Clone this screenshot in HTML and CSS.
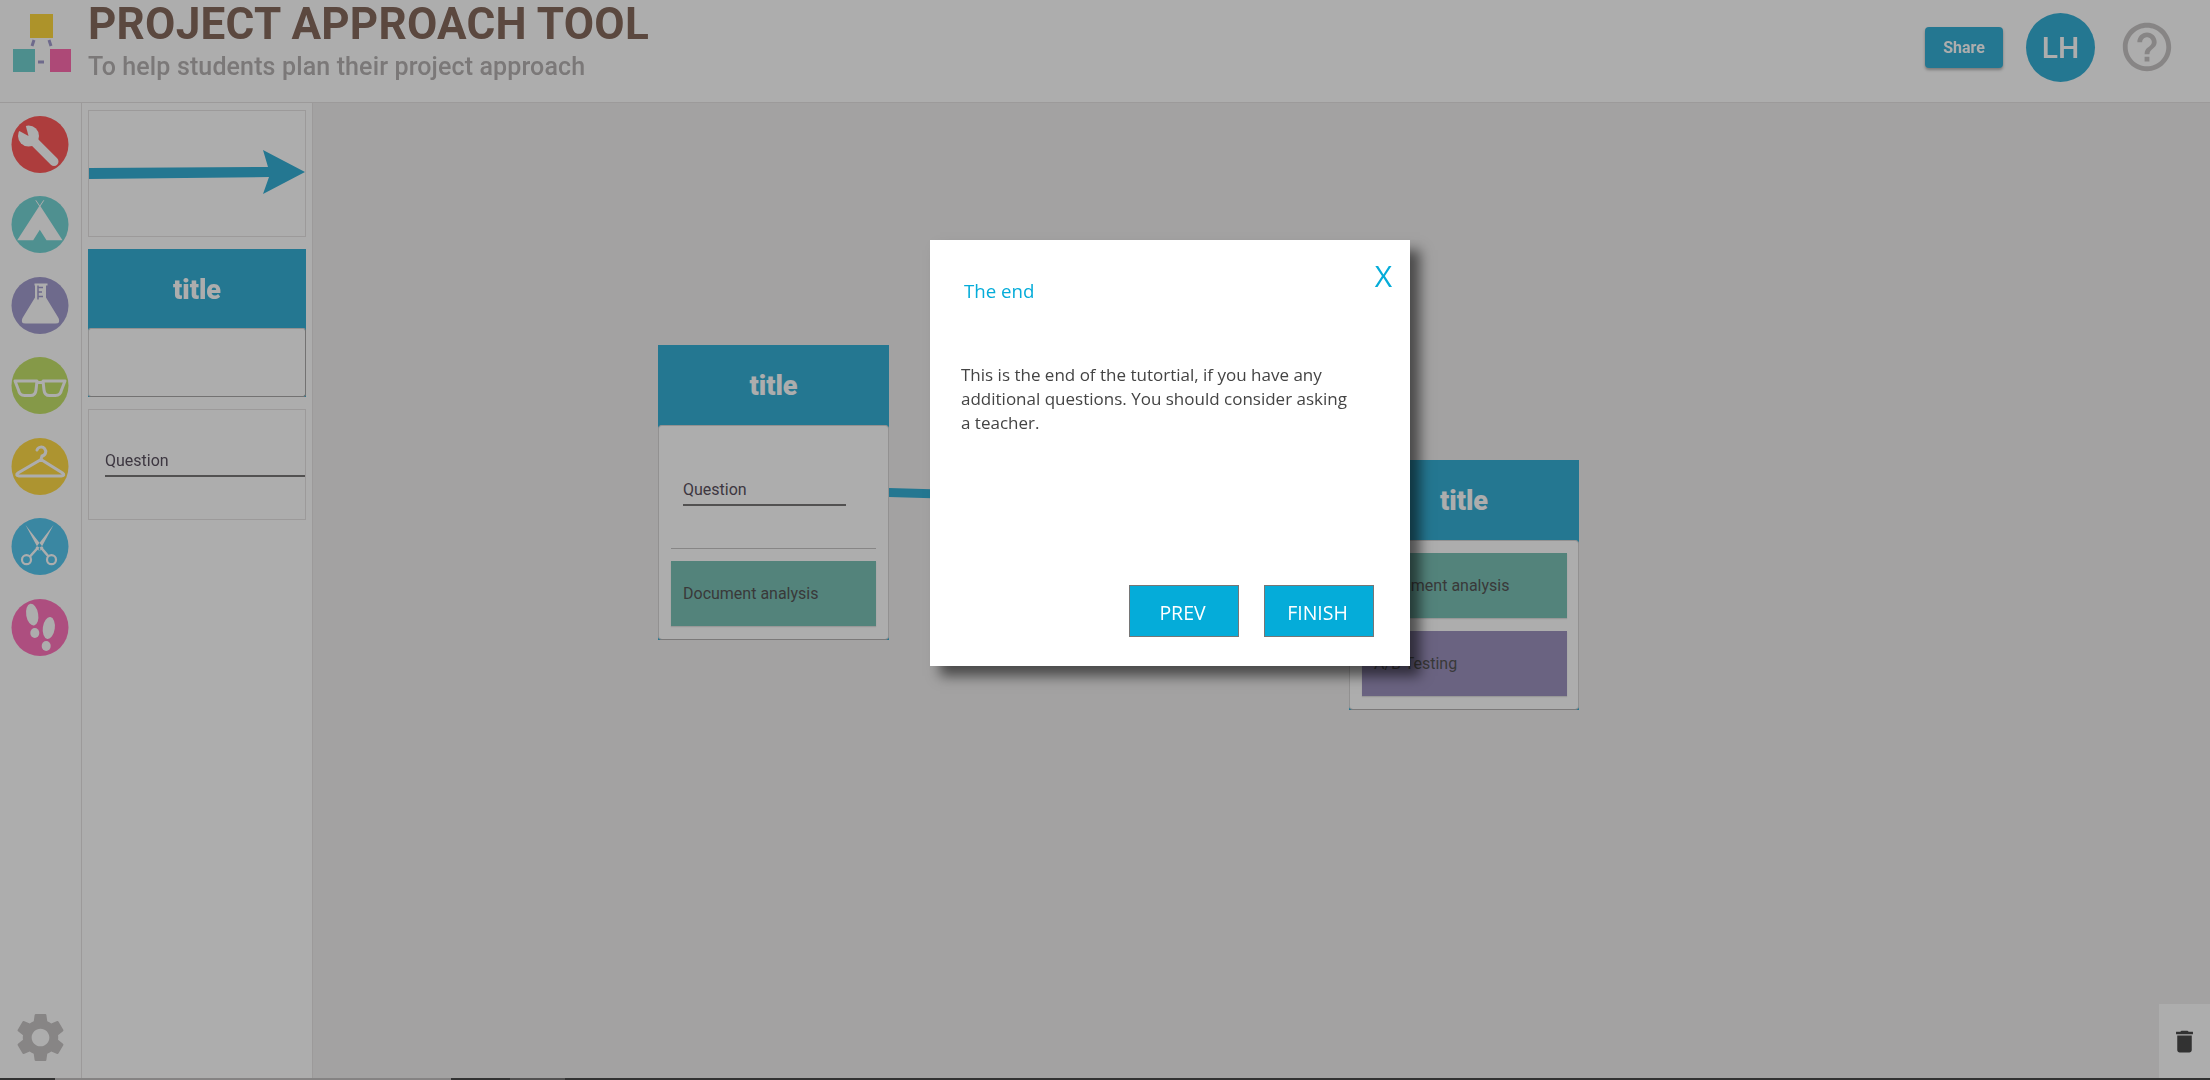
FILE: index.html
```html
<!DOCTYPE html>
<html lang="en">
<head>
    <meta charset="UTF-8">
    <meta name="viewport" content="width=device-width, initial-scale=1.0">
    <title>Project Approach Tool</title>
    <link rel="stylesheet" href="styles.css">
</head>
<body>
    <div class="app">
        <header class="top-bar">
            <svg class="logo" viewBox="0 0 72 72">
                <rect x="23" y="7" width="23" height="24" fill="#ffd93f"/>
                <rect x="6" y="42" width="22" height="23" fill="#72d2d0"/>
                <rect x="43" y="42" width="21" height="23" fill="#ff6cb0"/>
                <path d="M27 33l-2 6M42 33l2 6M31 55h6" stroke="#a39cce" stroke-width="3" fill="none"/>
            </svg>
            <div class="brand">
                <h1>PROJECT APPROACH TOOL</h1>
                <p>To help students plan their project approach</p>
            </div>
            <div class="top-actions">
                <button class="share-button">Share</button>
                <div class="avatar">LH</div>
                <svg class="help-icon" viewBox="0 0 24 24"><path d="M11 18h2v-2h-2v2zm1-16C6.48 2 2 6.48 2 12s4.48 10 10 10 10-4.48 10-10S17.52 2 12 2zm0 18c-4.41 0-8-3.59-8-8s3.59-8 8-8 8 3.59 8 8-3.59 8-8 8zm0-14c-2.21 0-4 1.79-4 4h2c0-1.1.9-2 2-2s2 .9 2 2c0 2-3 1.75-3 5h2c0-2.25 3-2.5 3-5 0-2.21-1.79-4-4-4z"/></svg>
            </div>
        </header>

        <div class="workspace">
            <nav class="icon-rail">
                <svg class="tool-icon" viewBox="0 0 57 57">
                    <circle cx="28.5" cy="28.5" r="28.5" fill="#ff5a5a"/>
                    <circle cx="17" cy="20" r="10.5" fill="#fff"/>
                    <path d="M20 23L42.500 45.500" stroke="#fff" stroke-width="9" stroke-linecap="round"/>
                    <path d="M17 20L6 14L13 5z" fill="#ff5a5a"/>
                </svg>
                <svg class="tool-icon" viewBox="0 0 57 57">
                    <circle cx="28.5" cy="28.5" r="28.500" fill="#75d5d5"/>
                    <path d="M28.300 9.300L51 44.300H35L28.300 33.700L21.700 44.300H5.700z" fill="#fff"/>
                    <path d="M24.300 4.300l4 6 4-6" stroke="#fff" stroke-width="1" fill="none"/>
                </svg>
                <svg class="tool-icon" viewBox="0 0 57 57">
                    <circle cx="28.5" cy="28.5" r="28.500" fill="#a39cce"/>
                    <path d="M23 6.500h13v2h-1.500v12L47 41q2.500 5.500-3 5.500H14q-5.500 0-3-5.500l12.500-20.500v-12H23z" fill="#fff"/>
                    <path d="M26.500 8.500v14M26.500 10.500h5M26.500 15h4M26.500 19.500h5" stroke="#a39cce" stroke-width="1.500" fill="none"/>
                </svg>
                <svg class="tool-icon" viewBox="0 0 57 57">
                    <circle cx="28.5" cy="28.5" r="28.500" fill="#c4e26a"/>
                    <path d="M3.500 24H25.500L24.500 33Q24 38.500 19 38.500H13Q8 38.500 7 33zM53.500 24H31.500L32.500 33Q33 38.500 38 38.500H44Q49 38.500 50 33zM25.500 25.500H31.500" stroke="#fff" stroke-width="3" fill="none" stroke-linejoin="round"/>
                </svg>
                <svg class="tool-icon" viewBox="0 0 57 57">
                    <circle cx="28.5" cy="28.5" r="28.500" fill="#ffdb47"/>
                    <path d="M25.500 12a4.500 4.500 0 1 1 5 6l-1 3.500L6.500 35q-3 2.500 1 3H50q4-.5 1-3L29.500 21.500" stroke="#fff" stroke-width="3" fill="none" stroke-linecap="round"/>
                </svg>
                <svg class="tool-icon" viewBox="0 0 57 57">
                    <circle cx="28.5" cy="28.5" r="28.500" fill="#56c8ef"/>
                    <path d="M14 7L32 30L28 33zM42 7L24 30L28 33z" fill="#fff"/>
                    <path d="M27 29L18.500 38.500M29 29L37 38.500" stroke="#fff" stroke-width="2.500"/>
                    <circle cx="15" cy="41.700" r="4.500" stroke="#fff" stroke-width="2.200" fill="none"/>
                    <circle cx="40" cy="41.700" r="4.500" stroke="#fff" stroke-width="2.200" fill="none"/>
                </svg>
                <svg class="tool-icon" viewBox="0 0 57 57">
                    <circle cx="28.5" cy="28.5" r="28.500" fill="#ff74bc"/>
                    <ellipse cx="20.700" cy="15.700" rx="6" ry="11" transform="rotate(-10 20.700 15.700)" fill="#fff"/>
                    <ellipse cx="23.300" cy="34" rx="4.500" ry="5" fill="#fff"/>
                    <ellipse cx="37.300" cy="29" rx="6" ry="11" transform="rotate(8 37.300 29)" fill="#fff"/>
                    <ellipse cx="34.700" cy="47" rx="4.500" ry="5" fill="#fff"/>
                </svg>
                <svg class="settings-icon" viewBox="0 0 24 24"><path d="M19.140 12.940c.04-.3.06-.61.06-.94 0-.32-.02-.64-.07-.94l2.030-1.580c.18-.14.23-.41.12-.61l-1.920-3.320c-.12-.22-.37-.29-.59-.22l-2.390.96c-.5-.38-1.030-.7-1.620-.94l-.36-2.540c-.04-.24-.24-.41-.48-.41h-3.840c-.24 0-.43.17-.47.41l-.36 2.540c-.59.24-1.130.57-1.620.94l-2.390-.96c-.22-.08-.47 0-.59.22L2.740 8.870c-.12.21-.08.47.12.61l2.030 1.580c-.05.3-.09.63-.09.94s.02.64.07.94l-2.030 1.580c-.18.14-.23.41-.12.61l1.920 3.320c.12.22.37.29.59.22l2.390-.96c.5.38 1.030.7 1.620.94l.36 2.540c.05.24.24.41.48.41h3.840c.24 0 .44-.17.47-.41l.36-2.540c.59-.24 1.130-.56 1.620-.94l2.390.96c.22.08.47 0 .59-.22l1.920-3.320c.12-.22.07-.47-.12-.61l-2.010-1.580zM12 15.600c-1.980 0-3.600-1.620-3.600-3.600s1.620-3.600 3.600-3.600 3.600 1.620 3.600 3.600-1.620 3.600-3.600 3.600z"/></svg>
            </nav>

            <aside class="palette">
                <div class="palette-item palette-arrow">
                    <svg viewBox="0 0 216 125" class="arrow-shape"><path d="M0 57L179 56L174 39L216 61L174 83L180 66L0 68z"/></svg>
                </div>
                <div class="palette-item palette-card">
                    <div class="palette-card-title">title</div>
                    <div class="palette-card-body"></div>
                </div>
                <div class="palette-item palette-question">
                    <div class="question-field">Question</div>
                </div>
            </aside>

            <main class="canvas">
                <svg class="connector" width="1897" height="975"><path d="M576 385L1036 398V407L576 394z"/></svg>

                <div class="node node-first">
                    <div class="node-title">title</div>
                    <div class="node-body">
                        <div class="node-question"><div class="question-field">Question</div></div>
                        <div class="node-divider"></div>
                        <div class="task task-green">Document analysis</div>
                    </div>
                </div>

                <div class="node node-second">
                    <div class="node-title">title</div>
                    <div class="node-body node-body-tasks">
                        <div class="task task-green">Document analysis</div>
                        <div class="task task-purple">A/B Testing</div>
                    </div>
                </div>

                <div class="trash">
                    <svg viewBox="0 0 24 24"><path d="M6 19c0 1.100.9 2 2 2h8c1.100 0 2-.9 2-2V7H6v12zM19 4h-3.500l-1-1h-5l-1 1H5v2h14V4z"/></svg>
                </div>
            </main>
        </div>
    </div>

    <div class="page-edge">
        <span class="edge-part edge-dark edge-start"></span>
        <span class="edge-part edge-light edge-gap"></span>
        <span class="edge-part edge-dark edge-mid"></span>
        <span class="edge-part edge-soft edge-tab"></span>
        <span class="edge-part edge-dark edge-end"></span>
    </div>

    <div class="overlay"></div>

    <div class="tutorial-modal">
        <button class="modal-close">X</button>
        <h2>The end</h2>
        <p>This is the end of the tutortial, if you have any additional questions. You should consider asking a teacher.</p>
        <div class="modal-buttons">
            <button class="modal-button">PREV</button>
            <button class="modal-button">FINISH</button>
        </div>
    </div>
</body>
</html>
```

FILE: styles.css
```css
:root {
    --teal: #36b0d6;
    --line: #e6e3e3;
    --modal-blue: #05acd9;
}

* {
    box-sizing: border-box;
}

html, body {
    height: 100%;
}

body {
    margin: 0;
    overflow: hidden;
    font-family: Roboto, Arial, sans-serif;
    background-color: #fff;
}

.app {
    height: 1078px;
    display: flex;
    flex-direction: column;
    filter: blur(0.5px);
}

/* header */
.top-bar {
    height: 103px;
    flex-shrink: 0;
    display: flex;
    background-color: #fff;
    border-bottom: 1px solid var(--line);
}

.logo {
    width: 72px;
    height: 72px;
    margin: 7px 0 0 7px;
}

.brand {
    margin-left: 9px;
}

.brand h1 {
    margin: 1px 0 0;
    font-size: 44px;
    line-height: 46px;
    font-weight: 700;
    letter-spacing: 0.25px;
    color: #866a5e;
}

.brand p {
    margin: 5px 0 0;
    font-size: 25px;
    line-height: 30px;
    font-weight: 500;
    letter-spacing: 0.13px;
    color: #b5b2b2;
}

.top-actions {
    margin-left: auto;
    display: flex;
    align-items: center;
    padding-right: 34px;
    padding-bottom: 8px;
}

.share-button {
    width: 78px;
    height: 41px;
    border: none;
    border-radius: 4px;
    background-color: var(--teal);
    color: #fff;
    font-family: Roboto, Arial, sans-serif;
    font-size: 16px;
    font-weight: 700;
    box-shadow: 0 2px 3px rgba(0, 0, 0, 0.3);
}

.avatar {
    width: 69px;
    height: 69px;
    margin-left: 23px;
    border-radius: 50%;
    background-color: var(--teal);
    color: #fff;
    font-size: 30px;
    font-weight: 500;
    display: flex;
    align-items: center;
    justify-content: center;
}

.help-icon {
    width: 58px;
    height: 58px;
    margin-left: 23px;
    fill: #c8c5c5;
}

/* left side */
.workspace {
    flex-grow: 1;
    display: flex;
    min-height: 0;
}

.icon-rail {
    width: 82px;
    flex-shrink: 0;
    display: flex;
    flex-direction: column;
    align-items: center;
    gap: 23.5px;
    padding-top: 12.5px;
    padding-right: 1px;
    background-color: #fff;
    border-right: 1px solid var(--line);
}

.tool-icon {
    width: 58px;
    height: 57px;
    flex-shrink: 0;
}

.settings-icon {
    width: 59px;
    height: 59px;
    margin-top: auto;
    margin-bottom: 11px;
    fill: #c8c5c5;
}

.palette {
    width: 231px;
    flex-shrink: 0;
    display: flex;
    flex-direction: column;
    gap: 12px;
    padding: 7px 5px 0 6px;
    background-color: #fff;
    border-right: 1px solid var(--line);
}

.palette-item {
    width: 218px;
    border: 1px solid var(--line);
}

.palette-arrow {
    height: 127px;
}

.arrow-shape {
    display: block;
    width: 216px;
    height: 125px;
    fill: var(--teal);
}

.palette-card {
    height: 148px;
    display: flex;
    flex-direction: column;
    border: none;
    background-color: var(--teal);
}

.palette-card-title {
    height: 79px;
    padding-top: 2px;
    display: flex;
    align-items: center;
    justify-content: center;
    color: #fff;
    font-size: 27px;
    font-weight: 900;
}

.palette-card-body {
    flex-grow: 1;
    border-radius: 3px;
    background-color: #fff;
    border: 1px solid #d8d6d6;
    border-right-color: #aaa8a8;
    border-bottom-color: #aaa8a8;
}

.palette-question {
    height: 111px;
    padding: 38px 0 0 16px;
}

.question-field {
    height: 29px;
    font-size: 16px;
    line-height: 25px;
    color: #5b5260;
    border-bottom: 2px solid #7a7878;
}

/* canvas */
.canvas {
    flex-grow: 1;
    position: relative;
    background-color: #f1efef;
}

.connector {
    position: absolute;
    left: 0;
    top: 0;
    fill: var(--teal);
}

.node {
    position: absolute;
    width: 231px;
    background-color: var(--teal);
}

.node-first {
    left: 345px;
    top: 242px;
}

.node-second {
    left: 1036px;
    top: 357px;
    width: 230px;
}

.node-title {
    height: 80px;
    padding-top: 2px;
    display: flex;
    align-items: center;
    justify-content: center;
    color: #fff;
    font-size: 27px;
    font-weight: 900;
}

.node-body {
    padding: 0 12px 13px;
    border-radius: 4px;
    background-color: #fff;
    border: 1px solid #d8d6d6;
    border-bottom-color: #b5b3b3;
}

.node-body-tasks {
    padding: 12px 11px 13px 12px;
    display: flex;
    flex-direction: column;
    gap: 13px;
}

.node-question {
    height: 122px;
    padding: 51px 30px 0 12px;
}

.node-divider {
    height: 1px;
    margin-bottom: 12px;
    background-color: #c8c6c6;
}

.task {
    height: 65px;
    padding-left: 12px;
    display: flex;
    align-items: center;
    font-size: 16px;
    color: #555;
    box-shadow: 0 1px 1px rgba(0, 0, 0, 0.12);
}

.task-green {
    background-color: #7bc1b6;
}

.task-purple {
    background-color: #9c93bf;
}

.trash {
    position: absolute;
    right: 0;
    bottom: 0;
    width: 51px;
    height: 74px;
    display: flex;
    align-items: center;
    justify-content: center;
    background-color: #fff;
}

.trash svg {
    width: 29px;
    height: 29px;
    fill: #4b4b4b;
}

/* bottom edge of the window */
.page-edge {
    height: 2px;
    display: flex;
}

.edge-part {
    height: 2px;
}

.edge-dark {
    background-color: #4b4b4b;
}

.edge-light {
    background-color: #c4c2c2;
}

.edge-soft {
    background-color: #7a7878;
}

.edge-start {
    width: 55px;
}

.edge-gap {
    width: 396px;
}

.edge-mid {
    width: 59px;
}

.edge-tab {
    width: 55px;
}

.edge-end {
    flex-grow: 1;
}

/* tutorial */
.overlay {
    position: fixed;
    left: 0;
    top: 0;
    right: 0;
    bottom: 0;
    background-color: rgba(1, 0, 0, 0.32);
}

.tutorial-modal {
    position: absolute;
    left: 930px;
    top: 240px;
    width: 480px;
    height: 426px;
    background-color: #fff;
    font-family: "Open Sans", Arial, sans-serif;
    box-shadow: 10px 10px 12px rgba(0, 0, 0, 0.55);
}

.tutorial-modal h2 {
    position: absolute;
    left: 34px;
    top: 38px;
    margin: 0;
    font-size: 18.7px;
    line-height: 26px;
    font-weight: 400;
    color: var(--modal-blue);
}

.tutorial-modal p {
    position: absolute;
    left: 31px;
    top: 123px;
    width: 395px;
    margin: 0;
    font-size: 17px;
    line-height: 24px;
    color: #444;
}

.modal-close {
    position: absolute;
    right: 18px;
    top: 16px;
    padding: 0;
    border: none;
    background: none;
    font-family: "Open Sans", Arial, sans-serif;
    font-size: 30px;
    line-height: 40px;
    color: var(--modal-blue);
}

.modal-buttons {
    position: absolute;
    right: 36px;
    bottom: 29px;
    display: flex;
    gap: 25px;
}

.modal-button {
    width: 110px;
    height: 52px;
    padding: 2px 3px 0 0;
    border: 1px solid #767676;
    background-color: var(--modal-blue);
    color: #fff;
    font-family: "Open Sans", Arial, sans-serif;
    font-size: 19.5px;
}
```
